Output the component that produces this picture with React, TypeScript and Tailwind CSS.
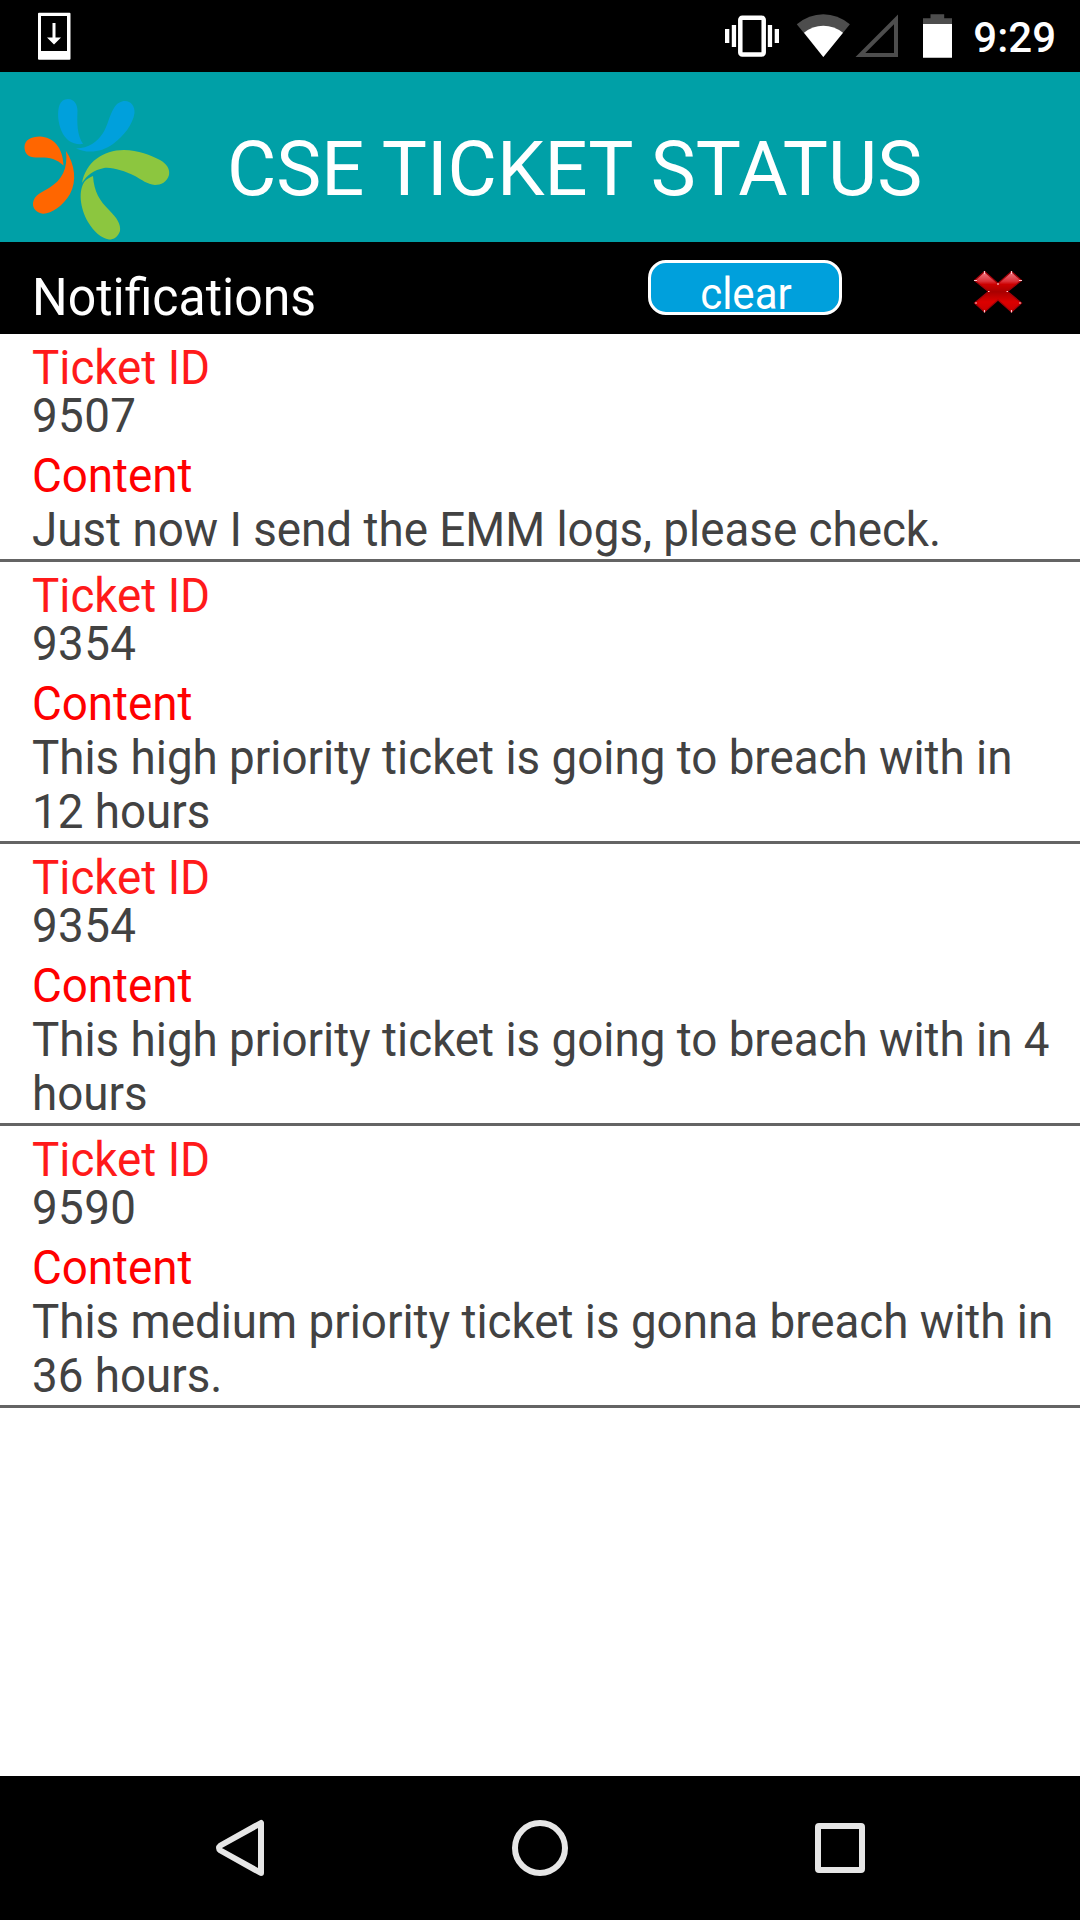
const tickets = [
  { id: "9507", content: "Just now I send the EMM logs, please check." },
  { id: "9354", content: "This high priority ticket is going to breach with in 12 hours" },
  { id: "9354", content: "This high priority ticket is going to breach with in 4 hours" },
  { id: "9590", content: "This medium priority ticket is gonna breach with in 36 hours." },
];

function StatusBar() {
  return (
    <div className="flex h-[72px] shrink-0 items-start justify-between bg-black pl-[37px] pr-[24px]">
      <svg width="34" height="48" viewBox="0 0 34 48" className="mt-[12px]">
        <path fill="#fff" fillRule="evenodd" d="M2 .7h30.5q1 0 1 1v45q0 1-1 1H2q-1 0-1-1V1.700q0-1 1-1ZM4 4v35h26V4Z" />
        <path fill="#fff" d="M15.500 11h3v14.500h5.500L17 32.500 10 25.500h5.500Z" />
      </svg>
      <div className="flex">
        <svg width="252" height="72" viewBox="700 0 252 72">
          <rect x="740.300" y="17.700" width="23.400" height="36.700" rx="2" fill="none" stroke="#fff" strokeWidth="4.500" />
          <path fill="#fff" d="M725 29h4.300v14H725ZM731.800 25h4.300v22h-4.300ZM767.800 25h4.300v22h-4.300ZM774.700 29h4.300v14h-4.300Z" />
          <path fill="#4d4d4d" d="M796.800 24.300Q809 14.300 823.300 14.300T849.900 24.300L823.300 57Z" />
          <path fill="#fff" d="M804 32.700Q812.500 25.700 823.300 25.700T843 32.700L823.300 57Z" />
          <path fill="#4d4d4d" fillRule="evenodd" d="M898 14.500V57H855.500ZM894 24.300 865.300 53H894Z" />
          <path fill="#4d4d4d" d="M923 24v-5.700h7.500V14.200h13.700v4.100H952V24Z" />
          <path fill="#fff" d="M923 24h29v33.700h-29Z" />
        </svg>
        <span className="ml-[21px] mt-[13px] text-[42px] font-medium leading-[50px] text-white">9:29</span>
      </div>
    </div>
  );
}

function Logo() {
  return (
    <svg width="170" height="170" viewBox="0 72 170 170" className="shrink-0">
      <g fill="#00a0dc">
        <path d="M68 99C74 99 77.500 104 77.500 111C77 123 77 135 83 144C73 145 66 141 61.500 131C58 123 57 112 59.500 105C61 101 64 99 68 99Z" />
        <path d="M125 101C131 101 135 106 134.500 113C133 124 124 136 113 144C102 152 88 154 76 148.500C89 148 97 142 103 133C108 125 109 116 114 108C117 103 121 101 125 101Z" />
      </g>
      <g fill="#ff6600">
        <path d="M24.500 147C24.500 140 31 136.500 40 136.500C53 137 63 147 63.500 165.500C56 158 47 157 37 157.500C29 158 24.500 154 24.500 147Z" />
        <path d="M66 151C75 165 77 181 70 194C63 206 51 214 43 213.700C37 213 32.500 209 33 203C34 195 42 192 49 188C62 180 68 169 66 151Z" />
      </g>
      <g fill="#8cc63f">
        <path d="M82 183C86 162 103 150 124 150C138 150.500 151 155 160 160C167 164 170 169 169 175C167 182 161 185 155 185C147 184 142 180 135 176C124 171 113 167 104 168C94 170 87 175 82 183Z" />
        <path d="M93 176C94 192 100 201 109 210C117 218 121 224 120 231C118 237 114 239.500 109 239.500C101 238 94 232 88 222C80 208 78 190 85 181C87 179 90 177 93 176Z" />
      </g>
    </svg>
  );
}

function CloseIcon() {
  return (
    <svg width="52" height="46" viewBox="0 0 52 46">
      <defs>
        <linearGradient id="closeFill" x1="0" y1="0" x2="0" y2="1">
          <stop offset="0" stopColor="#f0808a" />
          <stop offset=".24" stopColor="#dc3038" />
          <stop offset=".32" stopColor="#cc0000" />
          <stop offset=".5" stopColor="#a80000" />
          <stop offset=".75" stopColor="#dc0000" />
          <stop offset="1" stopColor="#c80000" />
        </linearGradient>
      </defs>
      <path d="M12.500 2.500 26 14.500 39.500 2.500 49.500 11.500 35.500 22.500 49.500 34 39.500 43 26 31 12.500 43 2.500 34 16.500 22.500 2.500 11.500Z" fill="url(#closeFill)" stroke="#a30008" strokeWidth="1.200" />
      <path d="M12.500 2v3M39.500 2v3M2 11.500h3M47 11.500h3M12.500 41v2.500M39.500 41v2.500M3 34h2M47 34h2M26 14v2M16 22.500h1.500M34.500 22.500H36" stroke="#ffc4cc" strokeWidth="1.200" />
    </svg>
  );
}

export default function App() {
  return (
    <div className="flex h-[1920px] w-[1080px] flex-col overflow-hidden bg-white font-['Roboto',sans-serif]">
      <StatusBar />
      <header className="flex h-[170px] shrink-0 bg-[#00a0a7]">
        <Logo />
        <h1 className="ml-[57px] mt-[53px] whitespace-nowrap text-[75.8px] leading-[90px] text-white">CSE TICKET STATUS</h1>
      </header>
      <div className="flex h-[92px] shrink-0 bg-black text-white">
        <h2 className="ml-[32px] mt-[26px] w-[616px] origin-left scale-x-[0.98] text-[51px] leading-[60px]">Notifications</h2>
        <button className="mt-[18px] flex h-[55px] w-[194px] items-start justify-center rounded-[18px] border-[3px] border-white bg-[#00a0dc] pt-[7px] text-[44px] leading-[49px]">
          <span className="ml-px scale-x-[0.955]">clear</span>
        </button>
        <button className="ml-[130px] mt-[27px] h-[46px]" aria-label="Close">
          <CloseIcon />
        </button>
      </div>
      <main className="flex-1 text-[48px] text-[#424242]">
        {tickets.map((t, i) => (
          <article key={i} className="border-b-[3px] border-[#646464] pb-[2px] pl-[32px] pt-[10px]">
            <div className="w-[1083px] origin-left scale-x-[0.953]">
              <h3 className="leading-[48px] text-[#ff1a1a]">Ticket ID</h3>
              <p className="leading-[48px] tracking-[0.4px]">{t.id}</p>
              <h3 className="mt-[9px] leading-[54px] text-[#ff0000]">Content</h3>
              <p className="leading-[54px]">{t.content}</p>
            </div>
          </article>
        ))}
      </main>
      <nav className="flex h-[144px] shrink-0 items-center justify-center bg-black">
        <svg width="720" height="144" viewBox="180 1776 720 144" fill="none" stroke="#e6e6e6" strokeWidth="6" strokeLinejoin="round">
          <path d="M261 1823v50L220.500 1850.500Q217.500 1848 220.500 1845.500Z" />
          <circle cx="540" cy="1848" r="25" />
          <rect x="818" y="1826" width="44" height="44" rx="1" />
        </svg>
      </nav>
    </div>
  );
}
